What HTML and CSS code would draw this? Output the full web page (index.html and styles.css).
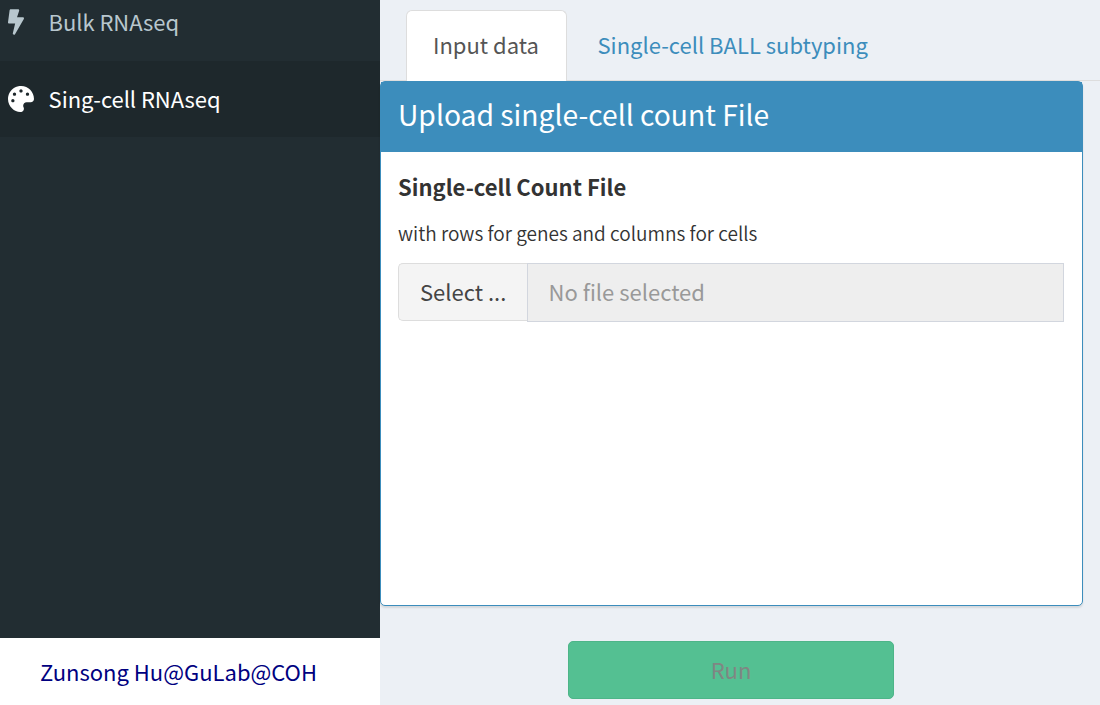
FILE: index.html
```html
<!DOCTYPE html>
<html lang="en">
<head>
<meta charset="utf-8">
<title>RNAseq subtyping</title>
<link rel="stylesheet" href="styles.css">
</head>
<body>
<div class="app">
  <aside class="sidebar">
    <nav class="menu">
      <a class="menu-item menu-item-first">
        <svg class="icon icon-bolt" viewBox="0 0 320 512"><path d="M296 160H180.6l42.6-129.8C227.2 15 215.7 0 200 0H56C44 0 33.8 8.9 32.2 20.8l-32 240C-1.7 275.2 9.5 288 24 288h118.7L96.6 482.5c-3.6 15.2 8 29.5 23.3 29.5 8.4 0 16.4-4.4 20.8-12l176-304c9.3-15.9-2.2-36-20.7-36z"/></svg>
        <span class="menu-label">Bulk RNAseq</span>
      </a>
      <a class="menu-item active">
        <svg class="icon icon-palette" viewBox="0 0 512 512"><path d="M204.3 5C104.9 24.4 24.8 104.3 5.2 203.4c-37 187 131.7 326.4 258.8 306.7 41.2-6.4 61.4-54.6 42.5-91.7-23.1-45.4 9.9-98.4 60.9-98.4h79.7c35.8 0 64.8-29.6 64.9-65.3C511.5 97.1 368.1-26.9 204.3 5zM96 320c-17.7 0-32-14.3-32-32s14.3-32 32-32 32 14.3 32 32-14.3 32-32 32zm32-128c-17.7 0-32-14.3-32-32s14.3-32 32-32 32 14.3 32 32-14.3 32-32 32zm128-64c-17.7 0-32-14.3-32-32s14.3-32 32-32 32 14.3 32 32-14.3 32-32 32zm128 64c-17.7 0-32-14.3-32-32s14.3-32 32-32 32 14.3 32 32-14.3 32-32 32z"/></svg>
        <span class="menu-label">Sing-cell RNAseq</span>
      </a>
    </nav>
    <footer class="credit"><span>Zunsong Hu@GuLab@COH</span></footer>
  </aside>
  <main class="content">
    <div class="tabs">
      <a class="tab tab-active"><span class="tab-text">Input data</span></a>
      <a class="tab"><span class="tab-text">Single-cell BALL subtyping</span></a>
    </div>
    <section class="box">
      <h3 class="box-title"><span>Upload single-cell count File</span></h3>
      <div class="box-body">
        <div class="label"><span>Single-cell Count File</span></div>
        <div class="hint"><span>with rows for genes and columns for cells</span></div>
        <div class="file-input">
          <div class="file-button"><span>Select ...</span></div>
          <div class="file-name"><span>No file selected</span></div>
        </div>
      </div>
    </section>
    <div class="run"><span>Run</span></div>
  </main>
</div>
</body>
</html>
```
FILE: styles.css
```css
* { box-sizing: border-box; }
body {
  margin: 0;
  font-family: "Noto Sans CJK SC", "Noto Sans", sans-serif;
  font-size: 22px;
  line-height: 32px;
  color: #333;
  white-space: nowrap;
}
.app { display: flex; height: 705px; overflow: hidden; background: #ecf0f5; }
.sidebar { display: flex; flex-direction: column; width: 380px; background: #222d32; }
.menu { flex: 1; }
.menu-item { display: flex; align-items: center; height: 76px; padding-left: 8px; color: #b8c7ce; }
.menu-item-first { height: 61px; padding-bottom: 17px; }
.menu-label { padding-bottom: 2px; letter-spacing: -0.06px; }
.active { background: #1e282c; color: #fff; }
.icon { flex: none; fill: currentColor; height: 26px; }
.icon-bolt { width: 16px; margin-right: 24.6px; }
.icon-palette { width: 26px; margin-right: 14.6px; }
.credit { display: flex; align-items: center; height: 67px; padding: 0 0 1px 40px; background: #fff; color: #000080; }
.content { width: 720px; }
.tabs { display: flex; height: 81px; padding: 10px 0 0 26px; border-bottom: 1px solid #ddd; color: #3c8dbc; }
.tab { height: 71px; padding: 18px 30.5px 0; }
.tab-active {
  width: 161px;
  padding: 17px 0 0 26px;
  background: #fff;
  border: 1px solid #ddd;
  border-bottom: 0;
  border-radius: 6px 6px 0 0;
  color: #555;
}
.box {
  width: 703px;
  height: 525px;
  border: 1px solid #3c8dbc;
  border-radius: 5px;
  background: #fff;
  box-shadow: 0 2px 2px rgba(0, 0, 0, .1);
}
.box-title {
  margin: 0;
  height: 70px;
  padding: 12px 17px;
  background: #3c8dbc;
  color: #fff;
  font-size: 28.25px;
  font-weight: 400;
  line-height: 40px;
}
.box-body { padding: 18px 18px 0 17px; }
.label { height: 50px; font-weight: 700; }
.hint { height: 43px; font-size: 19.05px; line-height: 26px; font-weight: 350; }
.file-input { display: flex; align-items: flex-start; }
.file-button {
  width: 129px;
  height: 58px;
  padding: 11px 21px;
  border: 1px solid #ddd;
  border-right: 0;
  border-radius: 5px 0 0 5px;
  background: #f4f4f4;
  color: #444;
}
.file-name {
  flex: 1;
  height: 59px;
  padding: 11px 20.5px;
  border: 1px solid #d2d6de;
  background: #eee;
  color: #999;
}
.run {
  display: flex;
  align-items: center;
  justify-content: center;
  width: 326px;
  height: 58px;
  margin: 35px 0 0 188px;
  padding-bottom: 2px;
  border: 1px solid #4db588;
  border-radius: 5px;
  background: #54c092;
  color: #808683;
}
```
